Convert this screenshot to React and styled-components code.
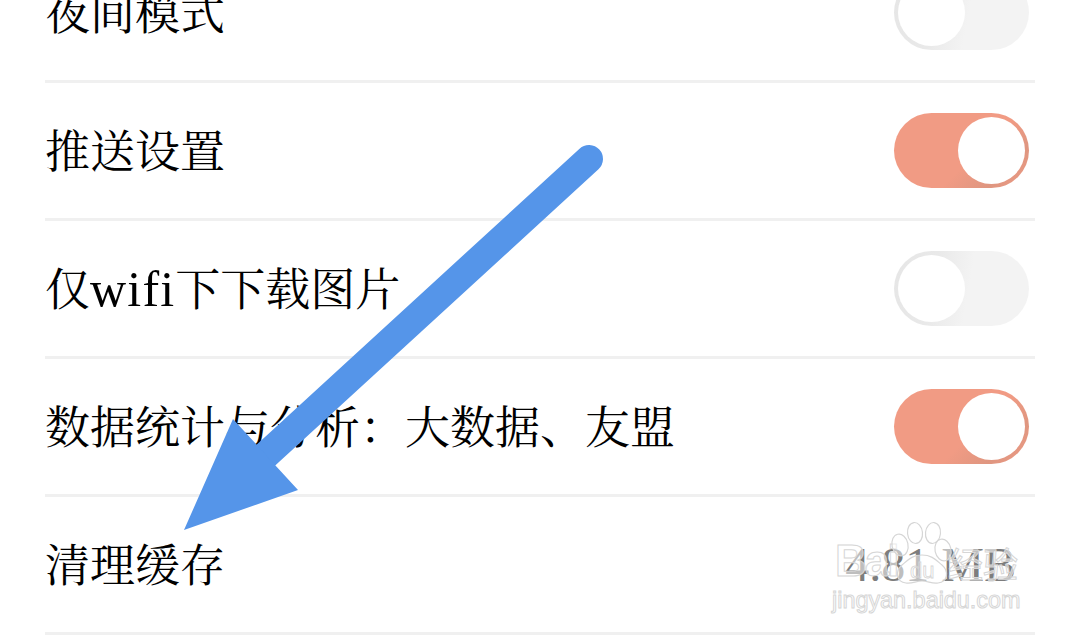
import React from 'react';
import styled, { createGlobalStyle } from 'styled-components';

const GlobalStyle = createGlobalStyle`
  html, body {
    margin: 0;
    padding: 0;
    background: #fff;
    overflow: hidden;
  }
`;

const Page = styled.div`
  position: relative;
  width: 1080px;
  height: 636px;
  overflow: hidden;
  background: #fff;
  font-family: "Liberation Serif", "Noto Serif CJK SC", "Noto Sans CJK SC", serif;
`;

const List = styled.ul`
  list-style: none;
  margin: -55px 45px 0;
  padding: 0;
`;

const Row = styled.li`
  display: flex;
  align-items: center;
  justify-content: space-between;
  box-sizing: border-box;
  height: 138px;
  padding-right: 6px;
  border-bottom: 3px solid #f0f0f0;
`;

const Label = styled.span`
  margin-bottom: 5px;
  font-size: 45px;
  color: #000;
  white-space: nowrap;
`;

const Latin = styled.span`
  font-size: 50px;
  letter-spacing: 1.2px;
`;

const Value = styled.span`
  margin-right: 13px;
  font-size: 48px;
  color: #7d7d7d;
  white-space: nowrap;
`;

const Switch = styled.div`
  position: relative;
  width: 135px;
  height: 75px;
  border-radius: 38px;
  background: ${p => (p.$on
    ? 'linear-gradient(135deg, #f19b84 58%, #df9680 80%, #ee9a84 100%)'
    : 'linear-gradient(100deg, #e6e6e6 0%, #e9e9e9 30%, #f3f3f3 55%, #f3f3f3 100%)')};
`;

const Knob = styled.span`
  position: absolute;
  top: 4px;
  left: ${p => (p.$on ? '64px' : '4px')};
  width: 67px;
  height: 67px;
  border-radius: 50%;
  background: #fff;
`;

const Arrow = styled.svg`
  position: absolute;
  left: 0;
  top: 0;
  pointer-events: none;
`;

const Watermark = styled.div`
  position: absolute;
  left: 832px;
  top: 521px;
  display: flex;
  flex-direction: column;
  gap: 3px;
  pointer-events: none;
  font-family: "Liberation Sans", "Noto Sans CJK SC", sans-serif;
  color: rgba(255, 255, 255, 0.5);
  -webkit-text-stroke: 1px #d6d6d6;
`;

const LogoRow = styled.div`
  display: flex;
  align-items: flex-end;
  height: 62px;
  padding-left: 3px;
`;

const LogoWord = styled.span`
  width: 53px;
  font-size: 44px;
  font-weight: 700;
  letter-spacing: -2px;
  line-height: 1;
  white-space: nowrap;
`;

const Paw = styled.svg`
  flex: none;
  width: 60px;
  height: 62px;
  overflow: visible;
`;

const LogoName = styled.span`
  font-size: 35px;
  line-height: 1;
  white-space: nowrap;
`;

const Url = styled.span`
  font-size: 23.4px;
  line-height: 1.2;
  white-space: nowrap;
`;

const rows = [
  { label: '夜间模式', on: false },
  { label: '推送设置', on: true },
  { label: <>仅<Latin>wifi</Latin>下下载图片</>, on: false },
  { label: '数据统计与分析：大数据、友盟', on: true },
  { label: '清理缓存', value: '4.81 MB' },
];

const App = () => (
  <Page>
    <GlobalStyle />
    <List>
      {rows.map((row, i) => (
        <Row key={i}>
          <Label>{row.label}</Label>
          {row.value
            ? <Value>{row.value}</Value>
            : <Switch $on={row.on}><Knob $on={row.on} /></Switch>}
        </Row>
      ))}
    </List>
    <Watermark>
      <LogoRow>
        <LogoWord>Bai</LogoWord>
        <Paw viewBox="0 0 60 62">
          <g fill="rgba(255,255,255,0.5)" stroke="#d6d6d6" strokeWidth="1.2">
            <ellipse cx="27" cy="12" rx="7.5" ry="10.5" transform="rotate(-6 27 12)" />
            <ellipse cx="45" cy="12" rx="7.5" ry="10.5" transform="rotate(6 45 12)" />
            <ellipse cx="12" cy="24" rx="8" ry="11" transform="rotate(-12 12 24)" />
            <ellipse cx="55" cy="29" rx="8" ry="11" transform="rotate(-12 55 29)" />
            <path d="M34 34c10 0 14 5 20 10 7 6 6 17-4 18-6 1-10-2-16-2s-10 3-16 2c-10-1-11-12-4-18 6-5 10-10 20-10z" />
          </g>
          <text x="22" y="57" fontSize="22" fontFamily="Liberation Sans" stroke="#d6d6d6" strokeWidth="0.8" fill="none">du</text>
        </Paw>
        <LogoName>经验</LogoName>
      </LogoRow>
      <Url>jingyan.baidu.com</Url>
    </Watermark>
    <Arrow width="1080" height="636" viewBox="0 0 1080 636">
      <line x1="589" y1="159" x2="266" y2="455" stroke="#5595e9" strokeWidth="28" strokeLinecap="round" />
      <polygon points="184,530 233,419 257,445 275,465 298,490" fill="#5595e9" />
    </Arrow>
  </Page>
);

export default App;
